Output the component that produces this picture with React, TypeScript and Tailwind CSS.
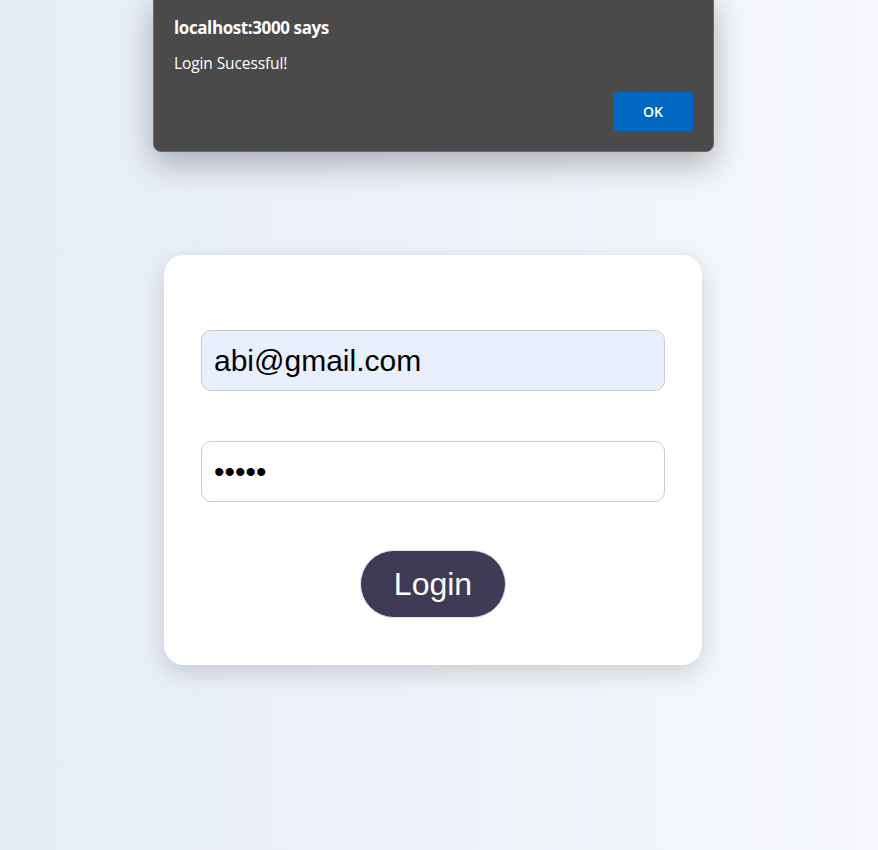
import { useState } from 'react';

export default function App() {
  const [email, setEmail] = useState('abi@gmail.com');
  const [password, setPassword] = useState('abcde');

  return (
    <div className="relative min-h-[850px] w-full bg-gradient-to-r from-[#e6edf7] to-[#f5f7fa] font-['Liberation_Sans',Arial,sans-serif]">
      {/* browser alert */}
      <div className="absolute left-[153px] top-[-8px] w-[561px] h-[160px] rounded-lg border border-[#6a6a6a] bg-[#4a4a4a] shadow-[0_12px_32px_rgba(0,0,0,0.28)] font-['Open_Sans','Noto_Sans',sans-serif] text-white">
        <div className="pl-5 pt-[22px] text-[17px] font-bold tracking-[-0.4px]">localhost:3000 says</div>
        <div className="pl-5 pt-[11px] text-[15.5px] tracking-[-0.1px]">Login Sucessful!</div>
        <div className="flex justify-end pr-5 pt-[17px]">
          <button className="w-[80px] h-[39px] rounded bg-[#0067c0] text-[14px] font-semibold text-white">OK</button>
        </div>
      </div>

      <div className="flex justify-center pr-[12px] pt-[255px]">
        <form
          onSubmit={(e) => e.preventDefault()}
          className="w-[538px] h-[410px] rounded-[20px] bg-white shadow-[0_8px_24px_rgba(0,0,0,0.15)] px-[37px] pt-[75px]"
        >
          <input
            type="email"
            value={email}
            onChange={(e) => setEmail(e.target.value)}
            className="block w-full h-[61px] rounded-[10px] border border-[#cccccc] bg-[#e8f0fe] px-[12px] text-[30px] text-black outline-none"
          />
          <input
            type="password"
            value={password}
            onChange={(e) => setPassword(e.target.value)}
            className="block w-full h-[61px] mt-[50px] rounded-[10px] border border-[#cccccc] bg-white px-[12px] text-[30px] text-black outline-none"
          />
          <div className="flex justify-center mt-[48px]">
            <button type="submit" className="h-[68px] px-[33px] rounded-full border border-[#e0e0e6] bg-[#3f3b57] text-[32px] text-white">
              Login
            </button>
          </div>
        </form>
      </div>
    </div>
  );
}
